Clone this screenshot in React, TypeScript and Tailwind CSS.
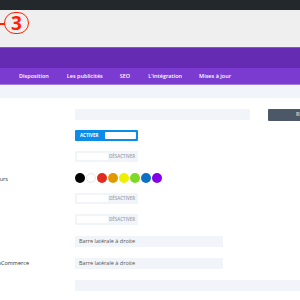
import React from "react";

const tabs = ["Disposition", "Les publicités", "SEO", "L'intégration", "Mises à jour"];
const tabGaps = ["ml-[19px]", "ml-[18px]", "ml-[17px]", "ml-[18px]", "ml-[17px]"];
const palette = ["#000000", "#ffffff", "#e02b20", "#e09900", "#edf000", "#7cda24", "#0c71c3", "#8300e9"];

function Label({ text, pr }: { text?: string; pr?: string }) {
  return (
    <div className={`flex w-[75px] shrink-0 justify-end overflow-hidden whitespace-nowrap text-[5.5px] text-[#333] ${pr ?? ""}`}>
      {text}
    </div>
  );
}

function Toggle({ on }: { on: boolean }) {
  if (on) {
    return (
      <div className="flex h-[11px] w-[63px] shrink-0 items-center rounded-[1px] bg-[#0c8ce9] p-[2px]">
        <span className="ml-[3px] w-[26px] text-[4.5px] font-bold text-white">ACTIVER</span>
        <div className="h-[7px] w-[32px] rounded-[1px] bg-white" />
      </div>
    );
  }
  return (
    <div className="flex h-[11px] w-[63px] shrink-0 items-center rounded-[1px] bg-[#f1f5f9] p-[2px]">
      <div className="h-[7px] w-[31px] rounded-[1px] bg-white" />
      <span className="ml-[1px] text-[4.5px] font-semibold text-[#9aa3ad]">DÉSACTIVER</span>
    </div>
  );
}

export default function App() {
  return (
    <div className="h-[300px] w-[300px] overflow-hidden bg-white" style={{ fontFamily: "'Open Sans', sans-serif" }}>
      <div className="h-[10px] bg-[#23282d]" />
      <div className="relative h-[37px] bg-[#efefef]">
        <div className="absolute left-0 top-[13px] h-[1.5px] w-[5px] bg-[#ff2200]" />
        <div className="absolute left-[4px] top-[2px] flex h-[22px] w-[25px] items-center justify-center rounded-full border-[1.5px] border-[#ff2200] text-[19px] font-bold leading-none text-[#ff2200]">
          3
        </div>
      </div>
      <div className="h-[1px] bg-[#8a4fd6]" />
      <div className="h-[20px] bg-[#652bb3]" />
      <div className="flex h-[16px] items-center bg-[#7b3ad0] text-[5.5px] font-semibold text-white">
        {tabs.map((t, i) => (
          <span key={t} className={`${tabGaps[i]} whitespace-nowrap`}>
            {t}
          </span>
        ))}
      </div>
      <div className="h-[1px] bg-[#a07ce0]" />
      <div className="h-[13px] bg-[#f1f4f8]" />

      <div className="mt-[11px] flex flex-col gap-[10px]">
        <div className="flex h-[11px] items-center">
          <Label />
          <div className="h-[11px] w-[175px] shrink-0 bg-[#f1f5f9]" />
          <div className="ml-[18px] flex h-[12px] w-[40px] shrink-0 items-center rounded-[1px] bg-[#4c5866] pl-[28px] text-[5px] font-bold text-[#c9d0d8]">
            RÉ
          </div>
        </div>
        <div className="flex h-[11px] items-center">
          <Label />
          <Toggle on />
        </div>
        <div className="flex h-[11px] items-center">
          <Label />
          <Toggle on={false} />
        </div>
        <div className="flex h-[11px] items-center">
          <Label text="Palette de couleurs" pr="pr-[67px] pt-[3px]" />
          <div className="flex shrink-0 gap-[1px]">
            {palette.map((c) => (
              <div
                key={c}
                className={`h-[10px] w-[10px] rounded-full ${c === "#ffffff" ? "border border-[#e5e7eb]" : ""}`}
                style={{ backgroundColor: c }}
              />
            ))}
          </div>
        </div>
        <div className="flex h-[11px] items-center">
          <Label />
          <Toggle on={false} />
        </div>
        <div className="flex h-[11px] items-center">
          <Label />
          <Toggle on={false} />
        </div>
        <div className="mt-[1px] flex h-[11px] items-center">
          <Label />
          <div className="flex h-[11px] w-[148px] shrink-0 items-center bg-[#f1f5f9] pl-[4px] text-[5.5px] text-[#555]">
            Barre latérale à droite
          </div>
        </div>
        <div className="mt-[1px] flex h-[11px] items-center">
          <Label text="Disposition WooCommerce" pr="pr-[46px]" />
          <div className="flex h-[11px] w-[148px] shrink-0 items-center bg-[#f1f5f9] pl-[4px] text-[5.5px] text-[#555]">
            Barre latérale à droite
          </div>
        </div>
        <div className="mt-[1px] flex h-[11px] items-center">
          <Label />
          <div className="h-[11px] w-[225px] shrink-0 bg-[#f1f5f9]" />
        </div>
      </div>
    </div>
  );
}
